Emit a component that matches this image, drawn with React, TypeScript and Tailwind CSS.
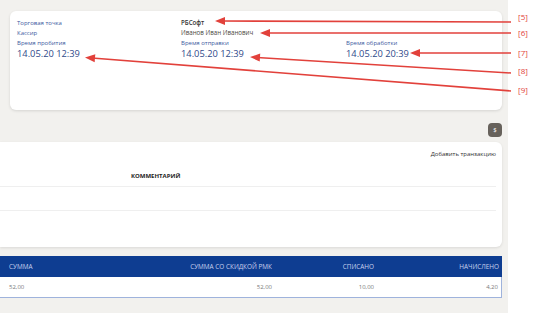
import React from 'react';

const info = [
  { label: 'Торговая точка', value: 'РБСофт' },
  { label: 'Кассир', value: 'Иванов Иван Иванович' },
];

const times = [
  { label: 'Время пробития', value: '14.05.20 12:39' },
  { label: 'Время отправки', value: '14.05.20 12:39' },
  { label: 'Время обработки', value: '14.05.20 20:39' },
];

const callouts = [
  { n: 5, y: 17, d: 'M511 22 L222 21', tip: [215, 21, 0] },
  { n: 6, y: 33, d: 'M511 33 L267 33', tip: [260, 33, 0] },
  { n: 7, y: 53, d: 'M511 53 L417 53', tip: [410, 53, 0] },
  { n: 8, y: 71, d: 'M511 73 L257 57.5', tip: [250, 57, 3.5] },
  { n: 9, y: 90, d: 'M511 91 L92 58', tip: [85, 57.5, 4.5] },
];

function Arrows() {
  return (
    <svg className="absolute left-0 top-0 pointer-events-none" width="536" height="313">
      {callouts.map(c => (
        <g key={c.n}>
          <path d={c.d} stroke="#e2413b" strokeWidth="1.6" fill="none" />
          <polygon
            points={`${c.tip[0]},${c.tip[1]} ${c.tip[0] + 10},${c.tip[1] - 4} ${c.tip[0] + 10},${c.tip[1] + 4}`}
            fill="#e2413b"
            transform={`rotate(${c.tip[2]} ${c.tip[0]} ${c.tip[1]})`}
          />
        </g>
      ))}
    </svg>
  );
}

export default function App() {
  return (
    <div className="relative w-[536px] h-[313px] overflow-hidden flex bg-white font-['Open_Sans',sans-serif]">
      <div className="w-[508px] h-full bg-[#f2f1ee] flex flex-col pt-[11px]">
        {/* Receipt info card */}
        <div className="ml-[10px] mr-[6px] h-[99px] bg-white rounded-md shadow-[0_1px_3px_rgba(0,0,0,0.12)] pl-[7px] pt-[7px]">
          <div className="grid grid-cols-[164px_165px_150px]">
            <div className="flex flex-col text-[6px] leading-[10px] text-[#3c5aa0]">
              {info.map(i => (
                <span key={i.label}>{i.label}</span>
              ))}
            </div>
            <div className="flex flex-col text-[6.2px] leading-[10px]">
              <span className="font-semibold text-[#333]">{info[0].value}</span>
              <span className="text-[#4a4740]">{info[1].value}</span>
            </div>
            <div />
            {times.map(t => (
              <div key={t.label} className="flex flex-col">
                <span className="text-[6px] leading-[10px] text-[#3c5aa0]">{t.label}</span>
                <span className="text-[9.3px] leading-[12px] text-[#2f4a8a]">{t.value}</span>
              </div>
            ))}
          </div>
        </div>

        <div className="flex justify-end mr-[6px] mt-[13px]">
          <button className="w-[14px] h-[14px] rounded-sm bg-[#67625c] text-white text-[6px] leading-none flex items-center justify-center">
            $
          </button>
        </div>

        {/* Transactions card */}
        <div className="mt-[5px] mr-[6px] h-[105px] bg-white rounded-r-md shadow-[0_1px_3px_rgba(0,0,0,0.1)] pr-[6px] pt-[7px] flex flex-col">
          <div className="flex justify-end text-[6px] leading-[10px] text-[#333]">Добавить транзакцию</div>
          <div className="h-[28px] flex items-end pb-[6px] pl-[131px] border-b border-[#efefef]">
            <span className="text-[6px] leading-[8px] font-bold text-[#222] uppercase">Комментарий</span>
          </div>
          <div className="h-[24px] border-b border-[#efefef]" />
        </div>

        {/* Sums table */}
        <div className="mt-[9px] mr-[6px]">
          <div className="h-[21px] bg-[#0e3d91] flex items-center text-[6.4px] uppercase text-[#c9d2ee] pr-[3px]">
            <span className="pl-[9px] w-[140px]">Сумма</span>
            <span className="w-[132px] text-right">Сумма со скидкой РМК</span>
            <span className="w-[102px] text-right">Списано</span>
            <span className="flex-1 text-right">Начислено</span>
          </div>
          <div className="h-[21px] bg-white flex items-center text-[6px] text-[#7a7a7a] pr-[3px] border-r border-b border-[#9fb3dc]">
            <span className="pl-[9px] w-[140px]">52,00</span>
            <span className="w-[132px] text-right">52,00</span>
            <span className="w-[102px] text-right">10,00</span>
            <span className="flex-1 text-right">4,20</span>
          </div>
        </div>
      </div>

      <div className="flex-1 relative">
        {callouts.map(c => (
          <span
            key={c.n}
            className="absolute left-[10px] text-[8px] leading-[10px] text-[#e2413b]"
            style={{ top: c.y - 5 }}
          >
            [{c.n}]
          </span>
        ))}
      </div>

      <Arrows />
    </div>
  );
}
